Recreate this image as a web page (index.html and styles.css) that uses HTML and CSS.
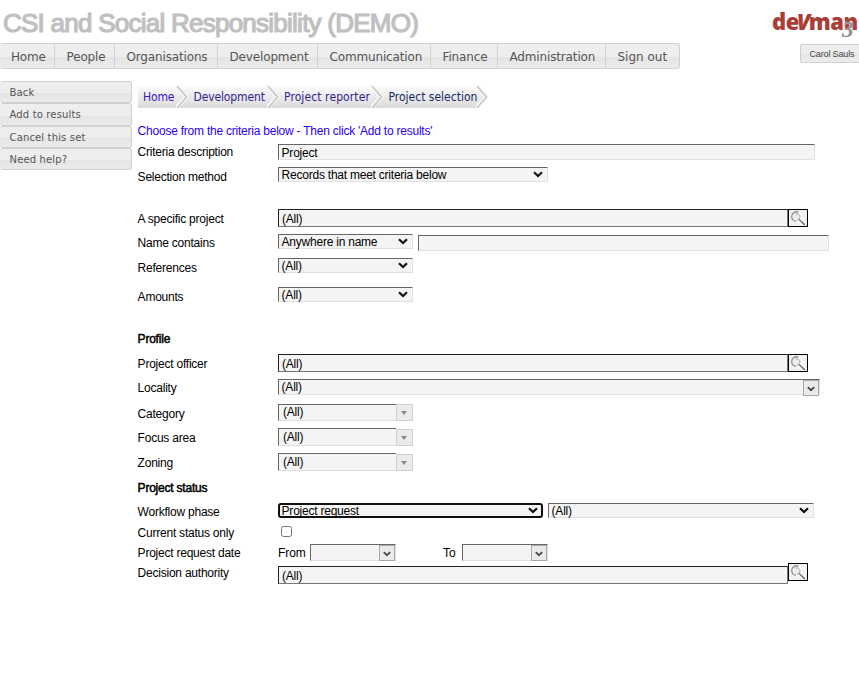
FILE: index.html
```
<!DOCTYPE html>
<html lang="en">
<head>
<meta charset="utf-8">
<title>CSI and Social Responsibility (DEMO)</title>
<link rel="stylesheet" href="styles.css">
</head>
<body>
<svg class="defs" width="0" height="0">
  <symbol id="arrow" viewBox="0 0 10 7"><path d="M1 1.2 5 5 9 1.2" fill="none" stroke="#111" stroke-width="2.2"/></symbol>
  <symbol id="lens" viewBox="0 0 18 16">
    <circle cx="8" cy="7" r="5.4" fill="#fff"/>
    <circle cx="7.6" cy="6.8" r="3.4" fill="#ececec"/>
    <path d="M11 10.5 16 15" stroke="#fff" stroke-width="4"/>
    <path d="M10.2 9.7 16 15" stroke="#808080" stroke-width="1.7"/>
    <path d="M7 11.3A4.9 4.9 0 0 1 2.7 6.8A4.9 4.9 0 0 1 9.5 2.2" fill="none" stroke="#8c8c8c" stroke-width="1.3"/>
    <path d="M6.5 3.8Q10.8 3.4 11.2 7.2Q10.6 9.8 7.6 10.6" fill="none" stroke="#a2a2a2" stroke-width="1"/>
  </symbol>
  <symbol id="chev" viewBox="0 0 12 22"><path d="M0 0 10.5 11 0 22" fill="none" stroke="#f7f7f7" stroke-width="4"/><path d="M1 0 10.5 11 1 22" fill="none" stroke="#c4c4c4" stroke-width="1.5"/></symbol>
</svg>
<header class="top">
  <h1>CSI and Social Responsibility (DEMO)</h1>
  <div class="logo">de<i>V</i>man<span class="three">3</span></div>
</header>
<div class="bar">
  <nav class="menu">
    <a class="m1">Home</a><a class="m2">People</a><a class="m3">Organisations</a><a class="m4">Development</a><a class="m5">Communication</a><a class="m6">Finance</a><a class="m7">Administration</a><a class="m8">Sign out</a>
  </nav>
  <div class="user">Carol Sauls</div>
</div>
<div class="body">
  <aside class="side">
    <a>Back</a><a>Add to results</a><a>Cancel this set</a><a>Need help?</a>
  </aside>
  <main>
    <div class="crumbs">
      <a class="c1">Home</a><svg class="chev"><use href="#chev"/></svg>
      <a class="c2">Development</a><svg class="chev"><use href="#chev"/></svg>
      <a class="c3">Project reporter</a><svg class="chev"><use href="#chev"/></svg>
      <a class="c4">Project selection</a><svg class="chev" viewBox="0 0 12 22"><path d="M1 0H12V22H1L10.5 11Z" fill="#fff"/><use href="#chev" width="12" height="22"/></svg>
    </div>
    <p class="hint">Choose from the criteria below - Then click 'Add to results'</p>
    <form class="form">
      <div class="row"><label>Criteria description</label><div class="field w537 h16">Project</div></div>
      <div class="row"><label class="d2">Selection method</label><div class="field w270">Records that meet criteria below<svg class="arrow"><use href="#arrow"/></svg></div></div>
      <div class="row"><label class="d2">A specific project</label><div class="field look">(All)</div><div class="find"><svg><use href="#lens"/></svg></div></div>
      <div class="row"><label class="d1">Name contains</label><div class="field w135">Anywhere in name<svg class="arrow"><use href="#arrow"/></svg></div><div class="field w411 h16"></div></div>
      <div class="row"><label class="d2">References</label><div class="field w135">(All)<svg class="arrow"><use href="#arrow"/></svg></div></div>
      <div class="row"><label class="d2">Amounts</label><div class="field w135">(All)<svg class="arrow"><use href="#arrow"/></svg></div></div>
      <div class="row"><h2>Profile</h2></div>
      <div class="row"><label class="d2">Project officer</label><div class="field look">(All)</div><div class="find"><svg><use href="#lens"/></svg></div></div>
      <div class="row"><label class="d1">Locality</label><div class="field w542 h16">(All)<span class="drop"><svg viewBox="0 0 10 7"><use href="#arrow"/></svg></span></div></div>
      <div class="row"><label class="d2">Category</label><div class="field combo">(All)</div><div class="tri"><i></i></div></div>
      <div class="row"><label class="d2">Focus area</label><div class="field combo h18">(All)</div><div class="tri low"><i></i></div></div>
      <div class="row"><label class="d2">Zoning</label><div class="field combo h18">(All)</div><div class="tri low"><i></i></div></div>
      <div class="row"><h2>Project status</h2></div>
      <div class="row"><label class="d1">Workflow phase</label><div class="field focus">Project request<svg class="arrow"><use href="#arrow"/></svg></div><div class="field w266">(All)<svg class="arrow"><use href="#arrow"/></svg></div></div>
      <div class="row"><label>Current status only</label><input type="checkbox"></div>
      <div class="row"><label class="d1">Project request date</label><span class="word from">From</span><div class="field date"><span class="drop"><svg viewBox="0 0 10 7"><use href="#arrow"/></svg></span></div><span class="word to">To</span><div class="field date"><span class="drop"><svg viewBox="0 0 10 7"><use href="#arrow"/></svg></span></div></div>
      <div class="row"><label class="d2">Decision authority</label><div class="field look d3">(All)</div><div class="find"><svg><use href="#lens"/></svg></div></div>
    </form>
  </main>
</div>
</body>
</html>
```
FILE: styles.css
```
* { box-sizing: border-box; }
body { margin: 0; width: 859px; height: 675px; overflow: hidden; background: #fff; color: #000; font: 12px/16px "Liberation Sans", Arial, sans-serif; letter-spacing: -.23px; }
.defs { display: block; }
svg { display: block; overflow: hidden; }
.top { display: flex; justify-content: space-between; height: 43px; }
h1 { margin: 8px 0 0 3px; font-size: 26px; line-height: 30px; font-weight: 400; letter-spacing: -.75px; color: #c0c0c0; -webkit-text-stroke: 1.2px #c0c0c0; white-space: nowrap; }
.logo { position: relative; width: 87px; height: 43px; padding-top: 8px; overflow: hidden; white-space: nowrap; font: 800 22px/26px "Open Sans", sans-serif; letter-spacing: -.5px; color: #a83e36; }
.logo i { margin: 0 -1px 0 -2px; }
.three { position: absolute; left: 70px; top: 18px; font: italic bold 23px/24px "Liberation Serif", serif; color: #8e8e8e; text-shadow: 0 0 1px #fff; }
.bar { display: flex; justify-content: space-between; height: 38px; }
.menu { display: flex; width: 680px; height: 26px; border: 1px solid #d2d2d2; border-left: 0; border-radius: 3px; background: linear-gradient(#eee 0 55%, #e5e5e5 56%, #ebebeb); font: 12px/24px "DejaVu Sans", Verdana, sans-serif; letter-spacing: -.15px; color: #555; }
.menu a { padding-left: 11.5px; padding-top: 1px; border-right: 1px solid #d2d2d2; white-space: nowrap; }
.m1 { width: 55px; }
.m2 { width: 60px; }
.m3 { width: 103px; }
.m4 { width: 100px; }
.m5 { width: 113px; }
.m6 { width: 67px; }
.m7 { width: 108px; }
.menu .m1 { padding-left: 11px; letter-spacing: -.2px; }
.menu .m8 { flex: 1; border-right: 0; letter-spacing: 0; }
.user { width: 59px; height: 19px; margin-top: 1px; padding: 0 0 0 8.5px; border: 1px solid #d0d0d0; border-right: 0; border-radius: 3px 0 0 3px; background: linear-gradient(#eee 0 50%, #e6e6e6 51%, #ececec); font-size: 9px; line-height: 18px; letter-spacing: -.15px; color: #444; white-space: nowrap; }
.body { display: flex; }
.side { width: 132px; font: 10px/20px "DejaVu Sans", Verdana, sans-serif; letter-spacing: .15px; color: #555; }
.side a { display: block; height: 22.25px; padding: 1px 0 0 9.5px; border: 1px solid #d0d0d0; border-left: 0; border-radius: 3px; background: linear-gradient(#eee 0 55%, #e4e4e4 56%, #ebebeb); }
main { padding: 5px 0 0 6px; }
.crumbs { display: flex; width: 350px; height: 22px; background: linear-gradient(#fbfbfb, #dadada); font: 12px/22px "DejaVu Sans Condensed", "DejaVu Sans", Tahoma, sans-serif; color: #33248f; white-space: nowrap; }
.crumbs a { padding-left: 5.5px; letter-spacing: -.13px; }
.crumbs .c1 { width: 38px; padding-left: 5px; color: #3e12c8; }
.crumbs .c2 { width: 79px; }
.crumbs .c3 { width: 92px; padding-left: 5px; letter-spacing: .1px; }
.crumbs .c4 { width: 93px; letter-spacing: 0; color: #182b66; }
.chev { width: 12px; height: 22px; flex: none; }
.hint { margin: 15px 0 5px; color: #2c00ec; white-space: nowrap; }
.form { display: grid; grid-template-rows: 23px 42px 25px 24px 29px 44px 23px 25px 25px 24px 25px 27px 23px 22px 19px 19px 21px; width: 715px; }
.row { display: flex; align-items: flex-start; white-space: nowrap; }
label { width: 140px; flex: none; }
.hint, label, h2 { text-indent: -.4px; }
.d1 { padding-top: 1px; }
.d2 { padding-top: 2px; }
h2 { margin: 0; font: inherit; letter-spacing: -.22px; -webkit-text-stroke: .5px #000; }
.field { position: relative; flex: none; height: 15px; padding-left: 2.6px; border: 1px solid #e0e0e0; border-top-color: #666; border-left-color: #666; background: #f4f4f4; line-height: 15px; }
.field.h16 { height: 16px; }
.w537.h16 { line-height: 17px; }
.w537 { width: 537px; }
.w270 { width: 270px; }
.w135 { width: 135px; }
.w411 { width: 411px; margin: 1px 0 0 5px; }
.w542 { width: 542px; }
.w266 { width: 266px; margin-left: 5px; }
.field.look { width: 510px; height: 18px; padding-left: 3px; border-color: #222 #777 #777 #222; line-height: 18px; }
.look.d3 { margin-top: 3px; padding-top: 0; }
.arrow { position: absolute; right: 4px; top: 3px; width: 10px; height: 7px; }
.find { width: 20px; height: 18px; border: 1px solid #000; background: #f1f1f1; }
.find svg { width: 18px; height: 16px; }
.drop { position: absolute; right: 0; top: 0; width: 16px; height: 16px; padding: 5px 3px; border: 1px solid #aaa; background: #e9e9e9; }
.drop svg { width: 8px; height: 6px; opacity: .75; }
.field.combo { width: 118px; height: 17px; padding-left: 4px; border-right: 0; line-height: 15px; }
.field.h18 { height: 18px; line-height: 17px; }
.tri { width: 17px; height: 17px; padding: 6px 4px; border: 1px solid #d0d0d0; background: #ebebeb; }
.tri.low { margin-top: 1px; }
.tri i { display: block; width: 0; border: 3.5px solid transparent; border-top: 4px solid #888; border-bottom: 0; }
.field.focus { width: 265px; border: 2px solid #101010; border-radius: 3px; padding-left: 1.6px; line-height: 13px; }
.focus .arrow { top: 2px; right: 3px; }
input { width: 11px; height: 11px; margin: 1px 0 0 3px; }
.word { padding-top: 1px; letter-spacing: -.1px; }
.from { width: 32px; }
.to { width: 19px; margin-left: 47px; }
.field.date { width: 86px; height: 17px; }
```
